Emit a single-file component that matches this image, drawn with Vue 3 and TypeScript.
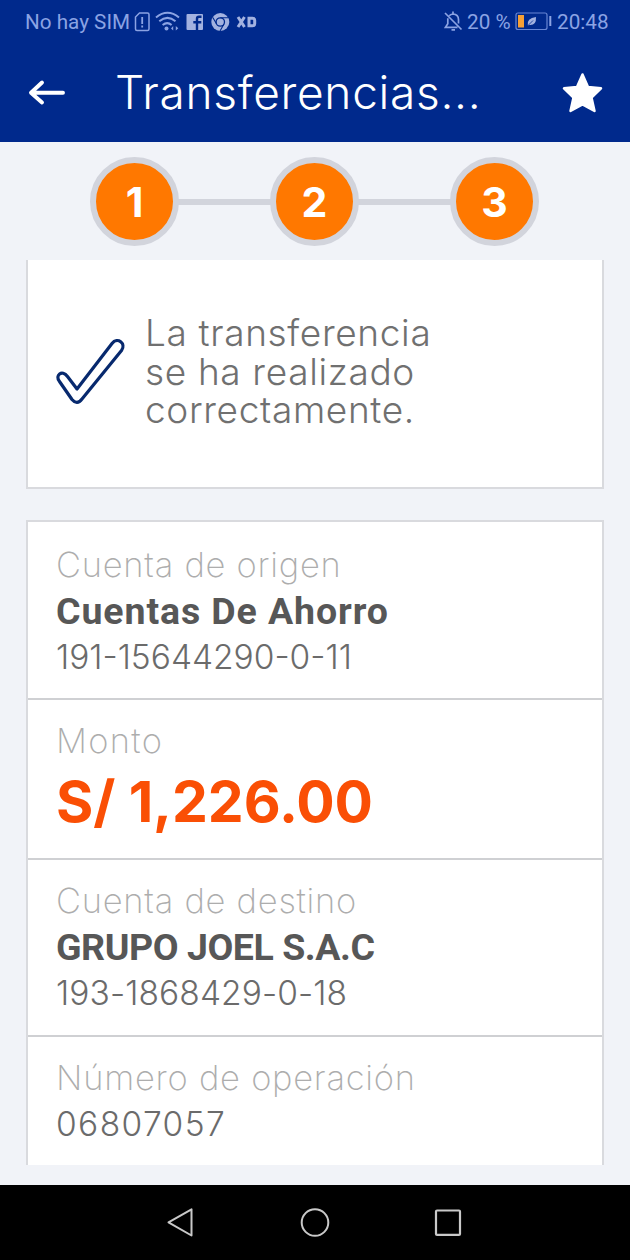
<script setup lang="ts">
interface Line {
  text: string
  kind: 'label' | 'name' | 'number' | 'amount'
  id: string
}

const steps: number[] = [1, 2, 3]

const message: string = 'La transferencia se ha realizado correctamente.'

const rows: Line[][] = [
  [
    { text: 'Cuenta de origen', kind: 'label', id: 'origin-label' },
    { text: 'Cuentas De Ahorro', kind: 'name', id: 'origin-name' },
    { text: '191-15644290-0-11', kind: 'number', id: 'origin-number' },
  ],
  [
    { text: 'Monto', kind: 'label', id: 'amount-label' },
    { text: 'S/ 1,226.00', kind: 'amount', id: 'amount-value' },
  ],
  [
    { text: 'Cuenta de destino', kind: 'label', id: 'target-label' },
    { text: 'GRUPO JOEL S.A.C', kind: 'name', id: 'target-name' },
    { text: '193-1868429-0-18', kind: 'number', id: 'target-number' },
  ],
  [
    { text: 'Número de operación', kind: 'label', id: 'operation-label' },
    { text: '06807057', kind: 'number', id: 'operation-number' },
  ],
]
</script>

<template>
  <div class="screen">
    <header class="top">
      <div class="status">
        <span class="carrier">No hay SIM</span>
        <svg class="status-left" width="126" height="24" viewBox="133 10 126 24" fill="none">
          <path d="M139.500 13H147.500Q149 13 149 14.500V29Q149 30.500 147.500 30.500H137Q135.500 30.500 135.500 29V17Z" stroke="#8ba3e3" stroke-width="1.500" />
          <path d="M142.200 17V24M142.200 25.500V27.500" stroke="#8ba3e3" stroke-width="1.800" />
          <path d="M156 17.500Q167.500 8 179 17.500M159.300 21.300Q167.500 14.500 175.500 21.300M162.600 25Q167.300 21.300 171.600 25" stroke="#8ba3e3" stroke-width="2" />
          <circle cx="166.500" cy="28.500" r="2" fill="#8ba3e3" />
          <path d="M173.200 26V30.500L171 28.500ZM175.800 26V30.500L178.300 28.300Z" fill="#8ba3e3" />
          <rect x="186.500" y="14" width="16.500" height="16" rx="1" fill="#a3b2e0" />
          <path d="M197 30V18.700Q197 16.800 199 16.800H201.500M193.300 22.300H201.300" stroke="#00298c" stroke-width="2.400" />
          <circle cx="220.300" cy="22" r="9" fill="#a3b2e0" />
          <circle cx="220.300" cy="22" r="4.200" stroke="#00298c" stroke-width="1.300" />
          <path d="M220.300 17.800H228M216.600 24L212.800 17.400M224 24L220 31" stroke="#00298c" stroke-width="1.100" />
          <path d="M238 17L244.500 27M244.500 17L238 27" stroke="#a3b2e0" stroke-width="3" />
          <path d="M249 18.300H252.500Q254.700 18.300 254.700 20.300V23.700Q254.700 25.700 252.500 25.700H249Z" stroke="#a3b2e0" stroke-width="3" />
        </svg>
        <span class="gap"></span>
        <svg class="bell" width="19" height="21" viewBox="444 11 19 21" fill="none" stroke="#8ba3e3" stroke-width="1.700">
          <path d="M449.200 15.800Q450.500 14.300 453 14Q458.500 14.500 458.500 19.500V23.500M447.800 18.300V23.800L445.500 27.300H457.500M453 11.500V14M451.500 29.800H455M445 13L461.500 29.500" />
        </svg>
        <span class="percent">20 %</span>
        <svg class="battery" width="37" height="20" viewBox="515 12 37 20" fill="none">
          <rect x="516" y="13" width="31" height="16.500" rx="2" stroke="#6886d4" stroke-width="1.200" />
          <rect x="518" y="15" width="6" height="12.500" fill="#f7a035" />
          <path d="M527.800 25.500Q526.500 18 536 17Q536.500 25.500 529.500 25Z" fill="#a3b2e0" />
          <path d="M527.500 26L533 20.500" stroke="#00298c" stroke-width=".8" />
          <path d="M550.300 16V26" stroke="#8ba3e3" stroke-width="2" />
        </svg>
        <span class="clock">20:48</span>
      </div>
      <div class="bar">
        <svg class="back" width="38" height="28" viewBox="28 79 38 28" fill="none" stroke="#fff" stroke-width="3.900" stroke-linecap="round" stroke-linejoin="round">
          <path d="M63 92.700H31M42 82.500L31 92.700L42 102.500" />
        </svg>
        <h1 class="title">Transferencias...</h1>
        <svg class="star" width="42" height="42" viewBox="562 71 42 42">
          <path d="M582.500 73.500L588 86L601 87.300L591.500 96.500L594.500 110L582.500 103.300L570.500 110L573.500 96.500L564 87.300L577 86Z" fill="#fff" stroke="#fff" stroke-width="2.500" stroke-linejoin="round" />
        </svg>
      </div>
    </header>

    <main class="content">
      <ol class="steps">
        <li v-for="step in steps" :key="step" class="step"><span class="step-number">{{ step }}</span></li>
      </ol>

      <section class="card notice">
        <svg class="check" width="70" height="68" viewBox="56 338 70 68" fill="none" stroke="#07296e" stroke-width="3.200" stroke-linejoin="round">
          <path d="M77 389L67.500 376.500C62 369 54.500 375.500 59.500 381.500L72 399.500Q77 405.500 82 399L121.500 350.500C126.500 343.500 117.500 336.500 112 343.500Z" />
        </svg>
        <p class="message">{{ message }}</p>
      </section>

      <section class="card details">
        <div v-for="(row, i) in rows" :key="i" class="row">
          <div v-for="line in row" :key="line.id" class="line" :class="[line.kind, line.id]">{{ line.text }}</div>
        </div>
      </section>
    </main>

    <nav class="nav">
      <svg width="30" height="32" viewBox="166 1207 30 32" fill="none" stroke="#c9c9c9" stroke-width="2" stroke-linejoin="round">
        <path d="M168.500 1222.300L191.500 1209.300V1235.500Z" />
      </svg>
      <svg width="32" height="32" viewBox="299 1207 32 32" fill="none" stroke="#c9c9c9" stroke-width="2">
        <circle cx="315" cy="1222.500" r="13.300" />
      </svg>
      <svg width="30" height="32" viewBox="434 1207 30 32" fill="none" stroke="#c9c9c9" stroke-width="2.200">
        <rect x="436" y="1210.500" width="24" height="24.400" rx="1" />
      </svg>
    </nav>
  </div>
</template>

<style>
body {
  margin: 0;
  background: #f1f3f8;
}
</style>

<style scoped>
.screen {
  width: 630px;
  height: 1260px;
  overflow: hidden;
  display: flex;
  flex-direction: column;
  background: #f1f3f8;
  font-family: Inter, "Liberation Sans", sans-serif;
  white-space: nowrap;
}
.top {
  height: 142px;
  flex: none;
  background: #00298c;
}
.status {
  height: 43px;
  box-sizing: border-box;
  padding: 0 22px 0 25px;
  display: flex;
  align-items: center;
  font-family: Roboto, sans-serif;
  font-size: 20.700px;
  color: #8ba3e3;
}
.carrier {
  width: 108px;
}
.gap {
  flex: 1;
}
.bell {
  margin-right: 4px;
}
.percent {
  width: 48px;
}
.battery {
  margin-right: 5px;
}
.clock {
  width: 51px;
}
.bar {
  height: 99px;
  display: flex;
  align-items: center;
  padding: 0 26px 0 28px;
}
.title {
  flex: 1;
  margin: 0;
  padding: 0 0 2px 49px;
  font-size: 46px;
  font-weight: 300;
  line-height: 60px;
  letter-spacing: 0.700px;
  color: #fff;
}
.content {
  height: 1023px;
  flex: none;
  overflow: hidden;
}
.steps {
  list-style: none;
  margin: 0;
  padding: 15px 91px 14px 90px;
  display: flex;
  justify-content: space-between;
  background: linear-gradient(#d2d4dc, #d2d4dc) center 57px / 360px 6px no-repeat;
}
.step {
  width: 89px;
  height: 89px;
  box-sizing: border-box;
  border: 6px solid #d2d4dc;
  border-radius: 50%;
  background: #ff7800;
  display: flex;
  align-items: center;
  justify-content: center;
}
.step-number {
  font-size: 41px;
  font-weight: 700;
  line-height: 50px;
  color: #fff;
}
.card {
  margin: 0 26px;
  background: #fff;
  border: 2px solid #d9dade;
}
.notice {
  height: 227px;
  border-top: 0;
  display: flex;
}
.check {
  margin: 78px 0 0 28px;
}
.message {
  width: 305px;
  margin: 54px 0 0 19px;
  color: #707070;
  font-size: 37px;
  font-weight: 300;
  line-height: 38.500px;
  letter-spacing: 0.650px;
  white-space: normal;
}
.details {
  margin-top: 31px;
}
.row {
  box-sizing: border-box;
  height: 177px;
  padding: 18px 0 0 28px;
  border-bottom: 2px solid #cfd0d3;
}
.row:first-child {
  height: 178px;
  padding-top: 19.500px;
}
.row:nth-child(2) {
  height: 160px;
}
.line {
  line-height: 46px;
}
.label {
  font-size: 34.500px;
  font-weight: 250;
  letter-spacing: 0.750px;
  color: #adadad;
}
.amount-label {
  letter-spacing: 1.300px;
}
.name {
  padding-top: 1px;
  font-family: Roboto, "Liberation Sans", sans-serif;
  font-size: 37.500px;
  font-weight: 700;
  line-height: 45px;
  letter-spacing: 0.900px;
  color: #575757;
}
.target-name {
  letter-spacing: -0.450px;
}
.number {
  font-size: 33.500px;
  font-weight: 300;
  color: #6b6b6b;
}
.target-number {
  letter-spacing: 0.100px;
}
.operation-number {
  letter-spacing: 1.400px;
}
.amount {
  font-size: 57px;
  font-weight: 700;
  line-height: 76px;
  letter-spacing: -0.100px;
  color: #fa4f05;
}
.nav {
  height: 75px;
  margin-top: 20px;
  flex: none;
  background: #000;
  display: flex;
  justify-content: center;
  align-items: center;
  gap: 103px;
}
</style>
